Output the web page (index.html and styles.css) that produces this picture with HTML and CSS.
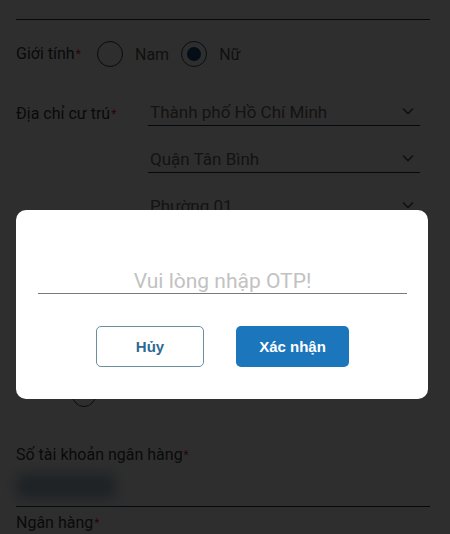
FILE: index.html
```html
<!DOCTYPE html>
<html lang="vi">
<head>
<meta charset="utf-8">
<title>Đăng ký</title>
<link rel="stylesheet" href="styles.css">
</head>
<body>
<main class="form">
  <div class="field-line top-line"></div>

  <div class="row gender">
    <span class="label">Giới tính<span class="req">*</span></span>
    <label class="radio"><span class="dot"></span><span class="opt">Nam</span></label>
    <label class="radio checked"><span class="dot"></span><span class="opt">Nữ</span></label>
  </div>

  <div class="address">
    <span class="label addr-label">Địa chỉ cư trú<span class="req">*</span></span>
    <div class="selects">
      <div class="select"><span>Thành phố Hồ Chí Minh</span><svg class="chev" viewBox="0 0 12 8"><polyline points="1,1.5 6,6.5 11,1.5"/></svg></div>
      <div class="select"><span>Quận Tân Bình</span><svg class="chev" viewBox="0 0 12 8"><polyline points="1,1.5 6,6.5 11,1.5"/></svg></div>
      <div class="select"><span>Phường 01</span><svg class="chev" viewBox="0 0 12 8"><polyline points="1,1.5 6,6.5 11,1.5"/></svg></div>
      <div class="select text-input"><span>Số nhà, tên đường</span></div>
    </div>
  </div>

  <div class="row otp-label">
    <span class="label">Nhận mã OTP qua<span class="req">*</span></span>
  </div>
  <div class="row sub-radio">
    <label class="radio"><span class="dot"></span><span class="opt">Tin nhắn SMS</span></label>
  </div>

  <div class="label bank-label">Số tài khoản ngân hàng<span class="req">*</span></div>
  <div class="bank-input"><span class="redacted"></span></div>
  <div class="label bank-name">Ngân hàng<span class="req">*</span></div>
</main>

<div class="overlay">
  <div class="modal">
    <input class="otp" type="text" placeholder="Vui lòng nhập OTP!">
    <div class="actions">
      <button class="btn btn-cancel">Hủy</button>
      <button class="btn btn-ok">Xác nhận</button>
    </div>
  </div>
</div>
</body>
</html>
```

FILE: styles.css
```css
* { box-sizing: border-box; }
html, body { margin: 0; height: 534px; overflow: hidden; }
body {
  background: #ffffff;
  font-family: Roboto, "Noto Sans", sans-serif;
  color: #444;
}
.form {
  padding: 0 20px 0 16px;
}
.field-line {
  border-bottom: 1.5px solid #1b3550;
}
.top-line { height: 20px; }

.label {
  font-size: 16px;
  line-height: 20px;
  color: #3a3a3a;
  white-space: nowrap;
}
.req { color: #e02424; font-size: 12px; vertical-align: top; margin-left: 1px; }

.row { display: flex; align-items: center; }
.gender { height: 26px; margin-top: 21px; }
.gender .label { width: 81px; }
.radio { display: flex; align-items: center; margin-right: 12px; }
.dot {
  width: 26px; height: 26px; border-radius: 50%;
  border: 1.8px solid #3a3a3a;
  display: flex; align-items: center; justify-content: center;
}
.checked .dot { border-color: #1e4c7a; }
.checked .dot::after {
  content: ""; width: 14px; height: 14px; border-radius: 50%; background: #1e4c7a;
}
.opt { margin-left: 12px; font-size: 16px; color: #5a5a5a; }

.address {
  display: grid;
  grid-template-columns: 132px 1fr;
  margin-top: 29px;
  padding-right: 10px;
}
.addr-label { padding-top: 8px; }
.selects { display: flex; flex-direction: column; gap: 17px; }
.select {
  height: 30px;
  border-bottom: 1.5px solid #1b3550;
  display: flex; align-items: flex-end; justify-content: space-between;
  padding: 0 6px 2px 2px;
  font-size: 17px; line-height: 22px; color: #6a6a6a;
}
.chev { width: 12px; height: 8px; margin-bottom: 8px; fill: none; stroke: #555; stroke-width: 1.6; }

.otp-label { margin-top: 30px; height: 20px; }
.sub-radio { margin-top: 66px; padding-left: 56px; }
.sub-radio .radio { align-items: flex-start; }
.sub-radio .dot { width: 24px; height: 24px; }
.sub-radio .opt { line-height: 16px; }

.bank-label { margin-top: 38px; }
.bank-input {
  height: 42px;
  border-bottom: 1.5px solid #1b3550;
  padding-top: 8px;
}
.redacted {
  display: block; width: 100px; height: 26px;
  background: #a8bccf; filter: blur(7px);
}
.bank-name { margin-top: 6px; }

.overlay {
  position: fixed; inset: 0;
  background: rgba(0, 0, 0, 0.82);
  padding: 210px 0 0 16px;
}
.modal {
  width: 412px; height: 189px;
  background: #fff;
  border-radius: 10px;
  padding: 48px 21px 0 22px;
}
.otp {
  display: block; width: 100%; height: 36px;
  border: none; border-bottom: 1.5px solid #7a7a7a;
  padding: 10px 0 0;
  text-align: center;
  font-family: Roboto, "Liberation Sans", sans-serif;
  font-size: 21px; font-weight: 400;
  color: #333; outline: none; background: transparent;
}
.otp::placeholder { color: #c2c2c2; }
.actions {
  display: flex; justify-content: center; gap: 32px;
  margin-top: 32px;
}
.btn {
  height: 41px;
  font-family: "Liberation Sans", Arial, sans-serif;
  font-size: 15px; font-weight: bold;
  border-radius: 5px;
}
.btn-cancel {
  width: 108px;
  background: #fff; color: #2c6a94;
  border: 1.5px solid #6a8e9c;
}
.btn-ok {
  width: 113px;
  background: #1b76bc; color: #fff;
  border: none;
}
```
